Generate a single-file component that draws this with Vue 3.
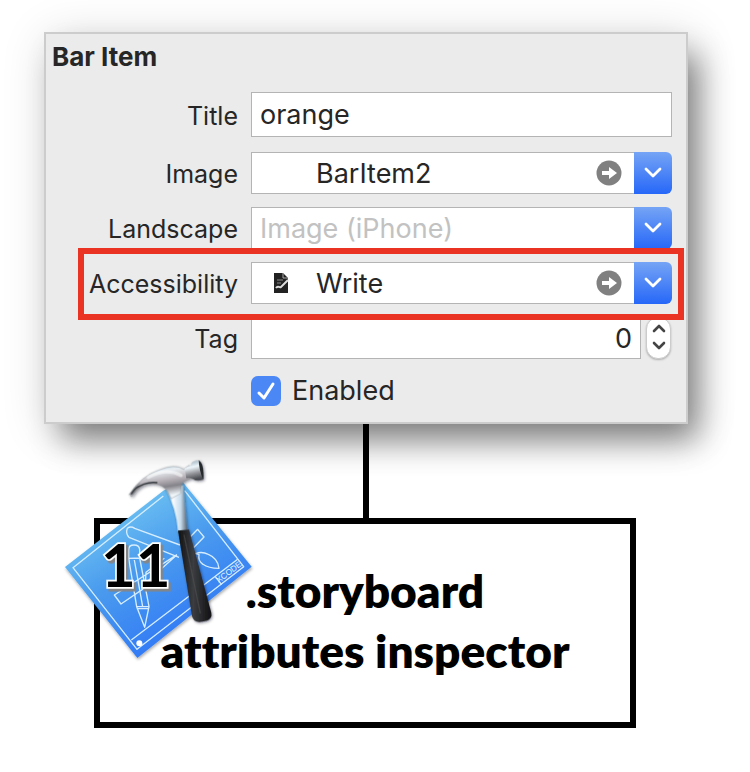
<script setup>
import { ref } from 'vue'

const title = ref('orange')
const image = ref('BarItem2')
const landscape = ref('')
const accessibility = ref('Write')
const tag = ref(0)
const enabled = ref(true)

const combos = [
  { id: 'image', label: 'Image', model: image, jump: true },
  { id: 'landscape', label: 'Landscape', model: landscape, placeholder: 'Image (iPhone)' },
  { id: 'accessibility', label: 'Accessibility', model: accessibility, jump: true, icon: true, highlight: true }
]
</script>

<template>
  <main class="page">
    <section class="panel">
      <h2 class="heading">Bar Item</h2>

      <div class="row row-title">
        <label class="label" for="title">Title</label>
        <input id="title" v-model="title" class="text-field" type="text" />
      </div>

      <div v-for="c in combos" :key="c.id" class="row" :class="{ highlight: c.highlight }">
        <label class="label" :for="c.id">{{ c.label }}</label>
        <div class="combo">
          <div class="combo-body">
            <span v-if="c.jump" class="glyph">
              <svg v-if="c.icon" width="15" height="20" viewBox="0 0 15 20" aria-hidden="true">
                <path d="M0 0h9l5 5v15H0z" fill="#222" />
                <path d="M9 0v5h5" fill="none" stroke="#aaa" />
                <path d="M3 7h6M3 10h4" stroke="#888" />
                <path d="M2 15c2-3 3 0 5-1l7-7" fill="none" stroke="#ddd" stroke-width="2" />
              </svg>
            </span>
            <input
              :id="c.id"
              v-model="c.model.value"
              class="combo-input"
              type="text"
              :placeholder="c.placeholder"
            />
            <button v-if="c.jump" class="jump" type="button" :aria-label="'Go to ' + c.label">
              <svg width="26" height="26" viewBox="0 0 26 26" aria-hidden="true">
                <circle cx="13" cy="13" r="12.5" fill="#808080" />
                <path d="M6 11h7V7l8 6-8 6v-4H6z" fill="#fff" />
              </svg>
            </button>
          </div>
          <button class="drop" type="button" :aria-label="'Show ' + c.label + ' options'">
            <svg width="18" height="12" viewBox="0 0 18 12" aria-hidden="true">
              <path d="M2 2l7 7 7-7" fill="none" stroke="#fff" stroke-width="2.8" stroke-linecap="round" stroke-linejoin="round" />
            </svg>
          </button>
        </div>
      </div>

      <div class="row">
        <label class="label" for="tag">Tag</label>
        <div class="tag-control">
          <input id="tag" v-model="tag" class="text-field tag-field" type="text" inputmode="numeric" />
          <div class="stepper">
            <button type="button" aria-label="Increase tag" @click="tag++">
              <svg width="14" height="9" viewBox="0 0 14 9" aria-hidden="true">
                <path d="M2 7l5-5 5 5" fill="none" stroke="#444" stroke-width="2.6" stroke-linecap="round" stroke-linejoin="round" />
              </svg>
            </button>
            <button type="button" aria-label="Decrease tag" @click="tag--">
              <svg width="14" height="9" viewBox="0 0 14 9" aria-hidden="true">
                <path d="M2 2l5 5 5-5" fill="none" stroke="#444" stroke-width="2.6" stroke-linecap="round" stroke-linejoin="round" />
              </svg>
            </button>
          </div>
        </div>
      </div>

      <div class="row row-check">
        <label class="check" for="enabled">
          <input id="enabled" v-model="enabled" type="checkbox" />
          <svg v-if="enabled" class="tick" width="30" height="30" viewBox="0 0 30 30" aria-hidden="true">
            <path d="M8 17l5 5 9-14" fill="none" stroke="#fff" stroke-width="3" stroke-linecap="round" stroke-linejoin="round" />
          </svg>
          <span>Enabled</span>
        </label>
      </div>
    </section>

    <div class="connector"></div>

    <section class="card">
      <p class="caption">.storyboard<br />attributes inspector</p>

      <svg class="xcode" width="210" height="220" viewBox="0 0 630 660" role="img" aria-label="Xcode 11">
        <defs>
          <linearGradient id="sheet" x1="0.2" y1="0.15" x2="0.65" y2="0.9">
            <stop offset="0" stop-color="#71c6f2" />
            <stop offset="0.45" stop-color="#4a9bee" />
            <stop offset="1" stop-color="#3078f6" />
          </linearGradient>
          <linearGradient id="steel" x1="0" y1="0" x2="0.3" y2="1">
            <stop offset="0" stop-color="#a9c4d8" />
            <stop offset="0.3" stop-color="#e9eff4" />
            <stop offset="0.55" stop-color="#b9b4b9" />
            <stop offset="0.75" stop-color="#85838a" />
            <stop offset="1" stop-color="#eef4f8" />
          </linearGradient>
          <linearGradient id="neck" x1="0" y1="0" x2="1" y2="0">
            <stop offset="0" stop-color="#8f979e" />
            <stop offset="0.35" stop-color="#fafcff" />
            <stop offset="0.7" stop-color="#c6dcec" />
            <stop offset="1" stop-color="#555e68" />
          </linearGradient>
          <linearGradient id="poll" x1="0" y1="0" x2="0.2" y2="1">
            <stop offset="0" stop-color="#8ea0ad" />
            <stop offset="0.4" stop-color="#eef7fc" />
            <stop offset="0.7" stop-color="#96979c" />
            <stop offset="1" stop-color="#4a4d52" />
          </linearGradient>
          <linearGradient id="grip" x1="0" y1="0" x2="1" y2="0">
            <stop offset="0" stop-color="#111" />
            <stop offset="0.45" stop-color="#3b3d40" />
            <stop offset="1" stop-color="#101113" />
          </linearGradient>
          <filter id="soft" x="-20%" y="-20%" width="140%" height="140%">
            <feDropShadow dx="2" dy="5" stdDeviation="5" flood-opacity="0.35" />
          </filter>
          <filter id="hammer-shadow" x="-30%" y="-20%" width="160%" height="140%">
            <feDropShadow dx="3" dy="3" stdDeviation="4" flood-color="#012" flood-opacity="0.45" />
          </filter>
        </defs>

        <path d="M30 351L325 122l55-30L590 350 247 624z" fill="url(#sheet)" filter="url(#soft)" />
        <g fill="none" stroke="#d5edff" stroke-width="4" stroke-linejoin="round">
          <path d="M325 138L54 353l192 245L566 350 389 122" />
          <path d="M229 570L548 328M480 379l20 25" />
          <path d="M217 235q10-8 22 0l136 50M217 235q-6 16 5 27l150 60" />
          <path d="M382 285l46-47 19 23-43 44M366 314L178 435l20 27 82-56M366 314l-95 86 2-33 55-42" />
          <path d="M221 325v-26q0-14 16-14t17 14v25zM221 325l24 145h37L254 324M245 470l24 62 13-62M245 476h37M238 330l25 140" />
          <path d="M422 311q18-8 38 2 29 12 32 42-32 0-48-12-16-11-12-29z" />
        </g>
        <circle cx="253" cy="580" r="9" fill="#fff" />
        <text class="stamp" x="491" y="400" transform="rotate(-37 491 400)">XCODE</text>

        <g filter="url(#hammer-shadow)">
          <path d="M330 112q34 60 39 131l28-1q-9-82-13-136z" fill="url(#neck)" />
          <path d="M222 134q36-56 90-74 48-20 74-2l16-12 10 38-27 12q-10 13-8 34l-28 16q-16-45-56-44-39-1-62 38l-6-3q14-28 30-37-17 8-25 30z" fill="url(#steel)" stroke="#6b737a" stroke-width="1" />
          <path d="M240 117q32-24 67-19M229 133q10-18 22-24" fill="none" stroke="#34393e" stroke-width="4" />
          <path d="M280 82q54-30 98-6" fill="none" stroke="#fff" stroke-width="10" opacity="0.55" stroke-linecap="round" />
          <path d="M389 56q20-8 20-16 3-8 24-9 15 25 12 58-20 6-31-2-10-5-20-2z" fill="url(#poll)" />
          <path d="M431 31q17 8 14 58-12-24-14-58" fill="#25292c" />
          <path d="M369 242l33-3 66 246q8 26-26 30-25 5-31-17z" fill="url(#grip)" />
          <path d="M387 254l49 236" stroke="#555" stroke-width="4" opacity="0.5" />
        </g>

        <text class="version" x="138" y="411">11</text>
      </svg>
    </section>
  </main>
</template>

<style>
body {
  margin: 0;
  background: #fff;
}
</style>

<style scoped>
* {
  box-sizing: border-box;
}

.page {
  display: flex;
  flex-direction: column;
  padding: 32px 62px 44px 44px;
  font-family: Inter, "Liberation Sans", sans-serif;
  color: #262626;
}

.panel {
  padding: 5px 14px 15px 6px;
  border: 2px solid #ccc;
  background: #ebebeb;
  box-shadow: 14px 20px 30px -4px rgba(0, 0, 0, 0.45), 4px 6px 44px rgba(0, 0, 0, 0.16);
}

.heading {
  margin: 0 0 17px;
  font-size: 26px;
  line-height: 36px;
  font-weight: 700;
}

.row {
  position: relative;
  display: grid;
  grid-template-columns: 186px 1fr;
  column-gap: 13px;
  align-items: center;
  height: 42px;
  margin-bottom: 13px;
}

.row-title {
  height: 45px;
  margin-bottom: 15px;
}

.label {
  padding-top: 2px;
  font-size: 25px;
  line-height: 32px;
  text-align: right;
}

input {
  font: inherit;
  color: inherit;
  min-width: 0;
}

button {
  padding: 0;
  border: 0;
  background: none;
}

button svg {
  display: block;
}

.text-field {
  width: 100%;
  height: 100%;
  padding: 0 8px;
  border: 1px solid #b4b4b4;
  border-radius: 0;
  background: #fff;
  font-size: 27px;
}

.row-title .text-field {
  height: 45px;
}

.combo {
  display: flex;
  height: 42px;
}

.combo-body {
  flex: 1;
  display: flex;
  align-items: center;
  min-width: 0;
  padding: 0 12px 0 8px;
  border: 1px solid #b4b4b4;
  border-right: 0;
  background: #fff;
}

.glyph {
  display: flex;
  width: 56px;
  padding-left: 14px;
}

.combo-input {
  flex: 1;
  width: 0;
  height: 100%;
  padding: 0;
  border: 0;
  background: transparent;
  font-size: 27px;
}

.combo-input::placeholder {
  color: #c2c2c2;
  opacity: 1;
}

.drop {
  display: flex;
  align-items: center;
  justify-content: center;
  width: 38px;
  border-radius: 0 6px 6px 0;
  background: linear-gradient(#75a4f5, #2667f8);
}

.highlight::after {
  content: "";
  position: absolute;
  inset: -14px -12px -16px 26px;
  z-index: 1;
  border: 6px solid #ea3323;
  pointer-events: none;
}

.tag-control {
  display: flex;
  gap: 5px;
  height: 42px;
  padding-right: 1px;
}

.tag-field {
  flex: 1;
  text-align: right;
}

.stepper {
  display: flex;
  flex-direction: column;
  justify-content: space-between;
  align-items: center;
  width: 25px;
  padding: 6px 0 8px;
  border: 1px solid #ccc;
  border-radius: 12px;
  background: #fff;
  box-shadow: 0 1px 2px rgba(0, 0, 0, 0.25);
}

.row-check {
  height: 32px;
  margin: 16px 0 0;
}

.check {
  grid-column: 2;
  position: relative;
  display: flex;
  align-items: center;
  gap: 11px;
  font-size: 27px;
  line-height: 32px;
}

.check input {
  appearance: none;
  width: 30px;
  height: 30px;
  margin: 0;
  border-radius: 7px;
  background: #d8d8d8;
}

.check input:checked {
  background: #4b88f6;
}

.tick {
  position: absolute;
  left: 0;
  top: 1px;
  pointer-events: none;
}

.connector {
  align-self: center;
  width: 6px;
  height: 94px;
  background: #000;
}

.card {
  position: relative;
  margin: 0 52px 0 50px;
  padding: 37px 12px 41px;
  border: 6px solid #000;
  background: #fff;
}

.caption {
  margin: 0;
  font-family: Lato, "Open Sans", sans-serif;
  font-size: 46px;
  line-height: 60px;
  font-weight: 800;
  font-variant-ligatures: none;
  text-align: center;
  color: #000;
}

.xcode {
  position: absolute;
  left: -45px;
  top: -74px;
  overflow: visible;
}

.version {
  font-family: Lato, "Open Sans", sans-serif;
  font-size: 180px;
  font-weight: 700;
  fill: #000;
  stroke: #fff;
  stroke-width: 10px;
  paint-order: stroke;
  filter: drop-shadow(7px 8px 0 #858585);
}

.stamp {
  font-family: "Liberation Sans", sans-serif;
  font-size: 25px;
  fill: #e5f4ff;
}
</style>
